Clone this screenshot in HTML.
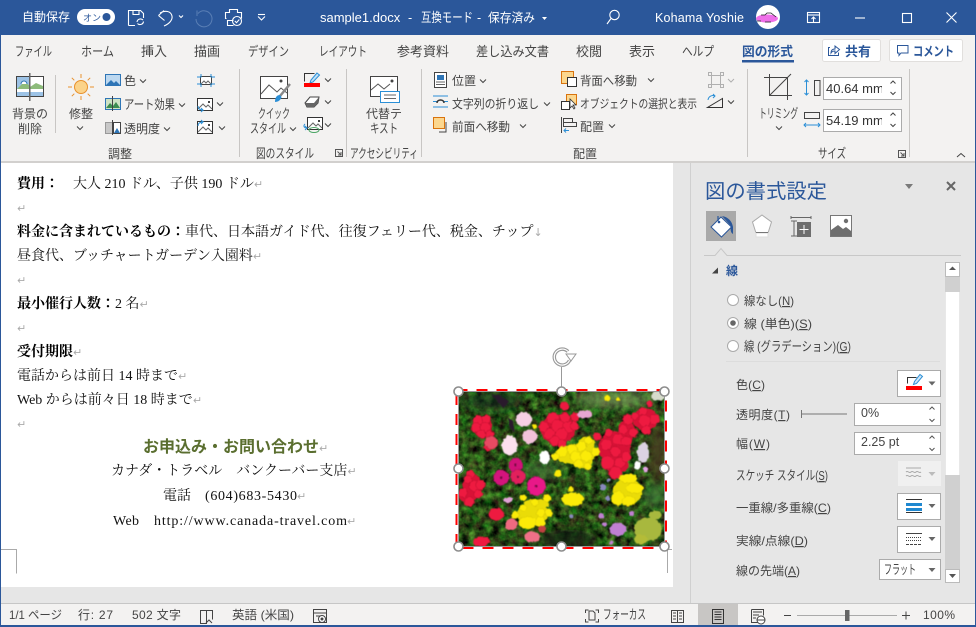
<!DOCTYPE html>
<html lang="ja"><head><meta charset="utf-8"><title>sample1.docx</title>
<style>
html,body{margin:0;padding:0;width:976px;height:627px;overflow:hidden;background:#e6e6e6}
svg{display:block;position:absolute;left:0;top:0}
text{font-family:"Liberation Sans","Noto Sans CJK JP",sans-serif;font-size:12px;fill:#444}
.k{font-size:13px}
.t{font-size:13px;fill:#444}
.d{font-family:"Liberation Serif","Noto Serif CJK SC",serif;font-size:14px;fill:#111}
.b{font-weight:700;fill:#000}
.r{font-family:"DejaVu Sans",sans-serif;font-size:11px;fill:#aaa;font-weight:400}
.s{fill:none;stroke:#444;stroke-width:1}
.bl{fill:none;stroke:#2b8fd6;stroke-width:1}
.box{fill:#fff;stroke:#ababab;stroke-width:1}
.h{fill:#fff;stroke:#8c8c8c;stroke-width:1.6}
</style></head><body>
<svg width="976" height="627" viewBox="0 0 976 627" xmlns="http://www.w3.org/2000/svg">
<defs>
<g id="c"><polyline points="-3,-1.5 0,1.5 3,-1.5" fill="none" stroke="#444" stroke-width="1"/></g>
<g id="pic"><rect x="0.5" y="0.5" width="15" height="12" fill="#fff" stroke="#333"/><polyline points="1,11 6,6 9,9 11,7 15,11" fill="none" stroke="#666"/><rect x="11" y="3" width="2" height="2" fill="#444"/></g>
<clipPath id="ic"><rect x="458" y="391" width="207" height="156"/></clipPath>
<clipPath id="ci1"><rect x="823" y="77" width="59" height="60"/></clipPath>
<filter id="leaf" x="0" y="0" width="100%" height="100%" color-interpolation-filters="sRGB"><feTurbulence type="fractalNoise" baseFrequency="0.13" numOctaves="3" seed="7"/><feColorMatrix type="matrix" values="0.45 0.2 0 0 -0.17  0.4 0.8 0 0 -0.3  0.2 0.15 0 0 -0.09  0 0 0 0 1"/></filter>
<filter id="fl" x="-5%" y="-5%" width="110%" height="110%" color-interpolation-filters="sRGB">
<feTurbulence type="fractalNoise" baseFrequency="0.3" numOctaves="2" seed="3" result="n"/>
<feDisplacementMap in="SourceGraphic" in2="n" scale="3" xChannelSelector="R" yChannelSelector="G"/>
<feGaussianBlur stdDeviation="0.45"/>
</filter>
<filter id="bl2" x="-20%" y="-20%" width="140%" height="140%"><feGaussianBlur stdDeviation="5"/></filter>
</defs>

<!-- frame backgrounds -->
<rect width="976" height="627" fill="#e6e6e6"/>
<rect x="0" y="0" width="976" height="35" fill="#2b579a"/>
<rect x="1" y="35" width="974" height="127" fill="#f3f2f1"/>
<rect x="1" y="161" width="974" height="2" fill="#d2d0ce"/>
<rect x="1" y="163" width="672" height="424" fill="#fff"/>
<rect x="690" y="587" width="1" height="17" fill="#c8c8c8"/>
<rect x="690" y="163" width="1" height="441" fill="#d0d0d0"/>
<rect x="1" y="604" width="974" height="21" fill="#f3f2f1"/>
<rect x="1" y="603" width="974" height="1" fill="#c6c6c6"/>

<!-- title bar -->
<text x="22" y="21" style="fill:#fff" textLength="48" lengthAdjust="spacingAndGlyphs">自動保存</text>
<rect x="77" y="9" width="38" height="16" rx="8" fill="#fff"/>
<text x="83" y="21" style="fill:#2b579a;font-size:9px">オン</text>
<circle cx="106.500" cy="17" r="4" fill="#2b579a"/>
<g fill="none" stroke="#fff" stroke-width="1.1">
<path d="M128.500 25.500V10.500H140.500L143.500 13.500V18M133 10.500V14.500H139V10.500M128.500 25.500H135"/>
<path d="M137 22a3.500 3.500 0 0 1 6-2M143.500 21.500a3.500 3.500 0 0 1-6 2"/>
<path d="M158.500 15.500l5.500-5M158.500 15.500l6 5M160 13c5-3 11-2 12 3 .8 4-3 8-8 10"/>
<polyline points="179,15.500 181,17.500 183,15.500"/>
<path d="M226.500 18.500h-1v-6h4v-3h8v3h4v6m-8 7h-6v-5h6"/>
<circle cx="237" cy="21" r="4.500"/><polyline points="234.800,21 236.500,22.700 239.300,19.500"/>
<polyline points="258,16.500 261.500,20 265,16.500"/><line x1="258" y1="14.500" x2="265" y2="14.500"/>
<circle cx="614.500" cy="15" r="4.700"/><line x1="611" y1="18.500" x2="607" y2="24"/>
<rect x="807.500" y="12.500" width="12" height="10"/><line x1="807" y1="15" x2="820" y2="15"/><path d="M813.500 22v-5M811.500 19l2-2 2 2"/>
<line x1="855" y1="18" x2="865" y2="18"/>
<rect x="902.500" y="13.500" width="9" height="9"/>
<path d="M946.500 12.500l10 10M956.500 12.500l-10 10"/>
</g>
<path d="M198 13.500A8 8 0 1 1 196 19M197 10.500V16" fill="none" stroke="#5a7fb5" stroke-width="1"/>
<text x="320" y="22" style="fill:#fff;font-size:13px">sample1.docx</text>
<text x="408" y="22" style="fill:#fff;font-size:12.500px">-</text>
<text x="421" y="22" style="fill:#fff;font-size:13px" textLength="52" lengthAdjust="spacingAndGlyphs">互換モード</text>
<text x="477" y="22" style="fill:#fff;font-size:12.500px">-</text>
<text x="488" y="22" style="fill:#fff;font-size:12.500px" textLength="47" lengthAdjust="spacingAndGlyphs">保存済み</text>
<polygon points="542,17 547,17 544.500,20" fill="#fff"/>
<text x="655" y="22" style="fill:#fff;font-size:12.500px" textLength="89">Kohama Yoshie</text>
<circle cx="768" cy="17" r="12" fill="#fff"/>
<ellipse cx="767" cy="18.500" rx="11" ry="4" fill="#ee6fe8"/>
<path d="M761 15h4l2-2h4l5 4M757 21h4m4 1h6" stroke="#222" stroke-width=".8" fill="none"/>

<!-- tabs -->
<text x="15" y="56" class="t" textLength="37" lengthAdjust="spacingAndGlyphs">ファイル</text>
<text x="81" y="56" class="t" textLength="33" lengthAdjust="spacingAndGlyphs">ホーム</text>
<text x="141" y="56" class="t" textLength="26" lengthAdjust="spacingAndGlyphs">挿入</text>
<text x="194" y="56" class="t" textLength="26" lengthAdjust="spacingAndGlyphs">描画</text>
<text x="248" y="56" class="t" textLength="41" lengthAdjust="spacingAndGlyphs">デザイン</text>
<text x="319" y="56" class="t" textLength="48" lengthAdjust="spacingAndGlyphs">レイアウト</text>
<text x="397" y="56" class="t" textLength="52" lengthAdjust="spacingAndGlyphs">参考資料</text>
<text x="476" y="56" class="t" textLength="73" lengthAdjust="spacingAndGlyphs">差し込み文書</text>
<text x="576" y="56" class="t" textLength="26" lengthAdjust="spacingAndGlyphs">校閲</text>
<text x="629" y="56" class="t" textLength="26" lengthAdjust="spacingAndGlyphs">表示</text>
<text x="682" y="56" class="t" textLength="32" lengthAdjust="spacingAndGlyphs">ヘルプ</text>
<text x="742" y="56" class="t" style="fill:#2b579a;font-weight:700" textLength="51" lengthAdjust="spacingAndGlyphs">図の形式</text>
<rect x="742" y="60" width="52" height="2.500" fill="#2b579a"/>
<rect x="822.500" y="39.500" width="58" height="22" rx="2" fill="#fff" stroke="#e1dfdd"/>
<rect x="889.500" y="39.500" width="73" height="22" rx="2" fill="#fff" stroke="#e1dfdd"/>
<path d="M830 47.500h-1.500v8h10v-3M835 46v3c-2.500 0-4 1.500-4 4 1-1.800 2.500-2 4-2v2.500l4.500-4-4.500-3.500z" fill="none" stroke="#2b579a"/>
<text x="845" y="56" style="fill:#2b579a;font-weight:700;font-size:13px" textLength="26" lengthAdjust="spacingAndGlyphs">共有</text>
<path d="M897.500 45.500h10.500v7.500h-7l-2 2.500v-2.500h-1.500z" fill="none" stroke="#2b579a"/>
<text x="913" y="56" style="fill:#2b579a;font-weight:700;font-size:13px" textLength="41" lengthAdjust="spacingAndGlyphs">コメント</text>

<!-- ribbon separators -->
<g fill="#c8c6c4">
<rect x="55" y="75" width="1" height="58"/><rect x="239" y="69" width="1" height="88"/><rect x="346" y="69" width="1" height="88"/><rect x="421" y="69" width="1" height="88"/><rect x="747" y="69" width="1" height="88"/><rect x="909" y="69" width="1" height="88"/>
</g>

<!-- background removal -->
<rect x="16.500" y="76.500" width="27" height="20" fill="#fff" stroke="#444"/>
<rect x="17" y="77" width="12" height="12" fill="#9dc3e6"/><rect x="30" y="77" width="13" height="12" fill="#fff"/>
<path d="M17 89l7-7 5 3v4zM30 89v-2l6-4 7 3v3z" fill="#8dbb7b"/>
<path d="M21 84a3 3 0 0 1 6 0" fill="#fff" stroke="#2e75b6"/>
<rect x="17" y="92" width="26" height="4" fill="#9dc3e6"/>
<rect x="29" y="73" width="1.500" height="28" fill="#666"/>
<text x="30" y="118" text-anchor="middle">背景の</text>
<text x="30" y="133" text-anchor="middle">削除</text>
<!-- sun -->
<circle cx="81" cy="87" r="6.500" fill="#fbd38a" stroke="#e8912d"/>
<path d="M81 74v4M81 96v4M68 87h4M90 87h4M71.800 77.800l2.500 2.500M87.700 93.700l2.500 2.500M90.200 77.800l-2.500 2.500M74.300 93.700l-2.500 2.500" stroke="#e8912d" fill="none"/>
<text x="81" y="118" text-anchor="middle">修整</text>
<use href="#c" x="80" y="128"/>
<!-- color etc -->
<rect x="105.500" y="74.500" width="15" height="11" fill="#bcd8f0" stroke="#2e75b6"/><path d="M106 85l5-5 3 3 2-2 4 4z" fill="#2e75b6"/>
<text x="124" y="85">色</text><use href="#c" x="143" y="81"/>
<rect x="105.500" y="98.500" width="15" height="11" fill="#cfe3c4" stroke="#2e75b6"/><path d="M106 108l4-5 3 3 3-4 4 6z" fill="#3d8d50"/><rect x="112" y="96" width="1" height="15" fill="#444"/>
<text x="124" y="109" class="k" textLength="51" lengthAdjust="spacingAndGlyphs">アート効果</text><use href="#c" x="182" y="105"/>
<rect x="105.500" y="122.500" width="7" height="11" fill="#c8c8c8" stroke="#999"/><rect x="113.500" y="122.500" width="7" height="11" fill="#fff" stroke="#444"/><path d="M114 133l3-5 3 5z" fill="#2e75b6"/><rect x="112" y="120" width="1" height="15" fill="#444"/>
<text x="124" y="133" textLength="36">透明度</text><use href="#c" x="167" y="129"/>
<!-- compress / change / reset -->
<rect x="200.500" y="76.500" width="11" height="8" fill="#fff" stroke="#444"/><path d="M201 84l3-3 2 2 2-2 3 3" fill="none" stroke="#666"/>
<path d="M197 77h4v-3M215 77h-4v-3M197 84h4v3M215 84h-4v3" fill="none" stroke="#2b8fd6"/>
<use href="#pic" x="197" y="98"/><path d="M198 106c0 3 2 4 5 4l-2-2m2 2l-2 2" class="bl"/><use href="#c" x="220" y="104"/>
<use href="#pic" x="197" y="121"/><path d="M198 126c0-3 2-4 5-4l-2 2m2-2l-2-2" class="bl"/><use href="#c" x="222" y="128"/>
<!-- quick styles -->
<rect x="260.500" y="76.500" width="27" height="22" fill="#fff" stroke="#444"/><polyline points="261,94 269,85 277,92 281,88 287,93" fill="none" stroke="#555"/><circle cx="281" cy="81" r="1.500" fill="#444"/>
<path d="M290 84l-10 12" stroke="#8a8a8a" stroke-width="2.500"/><path d="M280 95c-3 0-5 2-5 7 3 0 6-2 6.500-5z" fill="#2b8fd6"/>
<text x="258" y="118" class="k" textLength="32" lengthAdjust="spacingAndGlyphs">クイック</text>
<text x="250" y="133" class="k" textLength="36" lengthAdjust="spacingAndGlyphs">スタイル</text><use href="#c" x="293" y="129"/>
<path d="M304.500 81.500v-8h10" fill="none" stroke="#333"/><path d="M317 73l2.500 2-6.500 7-3 1 1-3z" fill="#bfe0f7" stroke="#2b8fd6"/>
<rect x="304" y="83" width="16" height="4" fill="#ff0000"/><use href="#c" x="328" y="80"/>
<path d="M305 103l5-6h9l-1 6-4 4h-7z" fill="#fff" stroke="#444"/><path d="M305 103h9v4h-6z M314 103l5-6-1 6-4 4z" fill="#666"/><use href="#c" x="328" y="102"/>
<use href="#pic" x="307" y="117"/><path d="M305 124c-2 2-1 4 2 4l-2 2m2-2l-2-2" class="bl"/><ellipse cx="314" cy="130" rx="5" ry="2.500" fill="none" stroke="#4aa564"/><use href="#c" x="328" y="125"/>
<text x="256" y="158" class="k" textLength="58" lengthAdjust="spacingAndGlyphs">図のスタイル</text>
<path d="M335.500 149.500h7v7h-7zM337.500 151.500l3.500 3.500M341 152v3h-3" fill="none" stroke="#555"/>
<text x="120" y="158" text-anchor="middle">調整</text>
<!-- alt text -->
<rect x="370.500" y="76.500" width="27" height="20" fill="#fff" stroke="#444"/><polyline points="371,90 378,84 384,89 390,84" fill="none" stroke="#555"/><circle cx="392" cy="81" r="1.500" fill="#444"/>
<rect x="380.500" y="91.500" width="19" height="11" fill="#fff" stroke="#2b8fd6"/><path d="M384 95h12M384 98.500h12" stroke="#666"/>
<text x="384" y="118" text-anchor="middle">代替テ</text>
<text x="370" y="133" class="k" textLength="28" lengthAdjust="spacingAndGlyphs">キスト</text>
<text x="350" y="158" class="k" textLength="68" lengthAdjust="spacingAndGlyphs">アクセシビリティ</text>
<!-- arrange -->
<rect x="434.500" y="72.500" width="12" height="15" fill="#fff" stroke="#444"/><rect x="437" y="75" width="7" height="5" fill="#2e75b6"/><path d="M436 82h9M436 84.500h9" stroke="#666"/>
<text x="452" y="85" textLength="24">位置</text><use href="#c" x="483" y="81"/>
<path d="M433 96h15M433 107h15" stroke="#2b8fd6"/><path d="M433 101.500h4M444 101.500h4" stroke="#2b8fd6"/><path d="M437 103c0-4 7-4 7 0" fill="none" stroke="#333" stroke-width="1.500"/>
<text x="452" y="108" textLength="87" lengthAdjust="spacingAndGlyphs">文字列の折り返し</text><use href="#c" x="547" y="104"/>
<rect x="433.500" y="117.500" width="11" height="11" fill="#fcd78e" stroke="#d9730d"/><path d="M446 122v10h-7" class="s"/>
<text x="452" y="131" textLength="58" lengthAdjust="spacingAndGlyphs">前面へ移動</text><use href="#c" x="523" y="126"/>
<rect x="561.500" y="71.500" width="12" height="12" fill="#fcd78e" stroke="#d9730d"/><rect x="567.500" y="77.500" width="9" height="9" fill="#fff" stroke="#333"/>
<text x="580" y="85" textLength="57" lengthAdjust="spacingAndGlyphs">背面へ移動</text><use href="#c" x="651" y="80"/>
<rect x="566.500" y="94.500" width="10" height="10" fill="#fcd78e" stroke="#d9730d"/><rect x="561.500" y="101.500" width="8" height="8" fill="#fff" stroke="#333"/><path d="M570 99v9l2-2 2 3 1-1-2-3 3 0z" fill="#fff" stroke="#333" stroke-width=".8"/>
<text x="580" y="108" textLength="117" lengthAdjust="spacingAndGlyphs">オブジェクトの選択と表示</text>
<path d="M561.500 117v16" class="s"/><rect x="563.500" y="118.500" width="9" height="4" fill="none" stroke="#444"/><rect x="563.500" y="122.500" width="13" height="4" fill="none" stroke="#444"/><path d="M569 130.500h-5m2-2l-2 2 2 2" class="bl"/>
<text x="580" y="131" textLength="24">配置</text><use href="#c" x="612" y="126"/>
<text x="585" y="158" text-anchor="middle">配置</text>
<rect x="711.500" y="75.500" width="9" height="9" fill="none" stroke="#b0b0b0"/><path d="M708.500 72.500h3v3h-3zM720.500 72.500h3v3h-3zM708.500 84.500h3v3h-3zM720.500 84.500h3v3h-3z" fill="none" stroke="#b0b0b0"/>
<polyline points="728,79 731,82 734,79" fill="none" stroke="#b0b0b0"/>
<path d="M707.500 107.500h15v-9z" fill="none" stroke="#333"/><path d="M708 100a5 5 0 0 1 7-4m-2 2l2-2-2-2" class="bl"/><use href="#c" x="731" y="102"/>
<!-- size -->
<path d="M764 77.500h23.500v22.500M769.500 74v21.500h22.500M769.500 95.500l21.500-21.500" fill="none" stroke="#444"/>
<text x="759" y="118" class="k" textLength="39" lengthAdjust="spacingAndGlyphs">トリミング</text><use href="#c" x="779" y="128"/>
<path d="M806.500 80v15M804.500 82l2-2 2 2M804.500 93l2 2 2-2" class="bl"/>
<rect x="814.500" y="80.500" width="5.500" height="15" fill="none" stroke="#444"/>
<rect x="804.500" y="112.500" width="15" height="6" fill="none" stroke="#444"/><path d="M804 125h16M806 123l-2 2 2 2M818 123l2 2-2 2" class="bl"/>
<rect x="823.500" y="77.500" width="78" height="22" class="box"/>
<rect x="823.500" y="109.500" width="78" height="22" class="box"/>
<g clip-path="url(#ci1)"><text x="826" y="93" style="font-size:13px;fill:#333">40.64 mm</text><text x="826" y="125" style="font-size:13px;fill:#333">54.19 mm</text></g>
<path d="M890.500 83.500l2.500-2.500 2.500 2.500M890.500 92l2.500 2.500 2.500-2.500M890.500 115.500l2.500-2.500 2.500 2.500M890.500 124l2.500 2.500 2.500-2.500" fill="none" stroke="#444"/>
<text x="818" y="158" class="k" textLength="28" lengthAdjust="spacingAndGlyphs">サイズ</text>
<path d="M898.500 150.500h7v7h-7zM900.500 152.500l3.500 3.500M904 153v3h-3" fill="none" stroke="#555"/>
<polyline points="957,157 961,153.500 965,157" fill="none" stroke="#444"/>

<!-- document -->
<text x="17" y="188" class="d"><tspan class="b">費用：</tspan></text>
<text x="73" y="188" class="d">大人 210 ドル、子供 190 ドル<tspan class="r">↵</tspan></text>
<text x="17" y="212" class="r">↵</text>
<text x="17" y="236" class="d"><tspan class="b">料金に含まれているもの：</tspan>車代、日本語ガイド代、往復フェリー代、税金、チップ<tspan class="r">↓</tspan></text>
<text x="17" y="260" class="d">昼食代、ブッチャートガーデン入園料<tspan class="r">↵</tspan></text>
<text x="17" y="284" class="r">↵</text>
<text x="17" y="308" class="d"><tspan class="b">最小催行人数：</tspan>2 名<tspan class="r">↵</tspan></text>
<text x="17" y="332" class="r">↵</text>
<text x="17" y="356" class="d"><tspan class="b">受付期限</tspan><tspan class="r">↵</tspan></text>
<text x="17" y="380" class="d">電話からは前日 14 時まで<tspan class="r">↵</tspan></text>
<text x="17" y="404" class="d">Web からは前々日 18 時まで<tspan class="r">↵</tspan></text>
<text x="17" y="428" class="r">↵</text>
<text x="143" y="452" style="font-size:16px;font-weight:700;fill:#5a6e2f">お申込み・お問い合わせ<tspan class="r">↵</tspan></text>
<text x="111" y="475" class="d">カナダ・トラベル　バンクーバー支店<tspan class="r">↵</tspan></text>
<text x="163" y="500" class="d">電話</text>
<text x="205" y="500" class="d" textLength="92">(604)683-5430</text>
<text x="297" y="500" class="r">↵</text>
<text x="113" y="525" class="d" textLength="26">Web</text>
<text x="154" y="525" class="d" textLength="193">http://www.canada-travel.com</text>
<text x="347" y="525" class="r">↵</text>
<path d="M1 549.500h15.500v24" fill="none" stroke="#aaa"/>
<path d="M665 549.500h7M667.500 549v24" fill="none" stroke="#aaa"/>

<!-- photo -->
<g clip-path="url(#ic)">
<rect x="458" y="391" width="207" height="156" fill="#2b5222"/>
<rect x="458" y="391" width="207" height="156" filter="url(#leaf)"/>
<g filter="url(#bl2)"><g transform="translate(458 391) scale(.33333)">
<ellipse cx="330" cy="445" rx="90" ry="30" fill="#0c1a0a" opacity=".75"/>
<ellipse cx="100" cy="30" rx="90" ry="30" fill="#18301a" opacity=".6"/>
<ellipse cx="470" cy="25" rx="120" ry="22" fill="#7f9f60" opacity=".75"/>
<ellipse cx="600" cy="190" rx="28" ry="90" fill="#45391f" opacity=".9"/>
<ellipse cx="590" cy="315" rx="35" ry="35" fill="#3f7a3a" opacity=".8"/>
<ellipse cx="250" cy="240" rx="60" ry="30" fill="#4a7d3a" opacity=".6"/>
</g></g>
<g filter="url(#fl)"><g transform="translate(458 391) scale(.33333)">
<path d="M100 10l30 5 25 15-20 22-20-25zM150 80l15 10 5 35-15-15z" fill="#2a1a2c"/>
<ellipse cx="600" cy="15" rx="22" ry="14" fill="#d6dccb"/>
<!-- light green clusters -->
<g fill="#a8b83e"><ellipse cx="570" cy="415" rx="42" ry="35"/><ellipse cx="592" cy="372" rx="20" ry="13"/><ellipse cx="548" cy="445" rx="20" ry="15" fill="#b4bc38"/></g>
<!-- red backing masses -->
<g fill="#d81236">
<ellipse cx="72" cy="108" rx="30" ry="28"/><ellipse cx="300" cy="115" rx="52" ry="44"/><ellipse cx="470" cy="170" rx="48" ry="48"/><ellipse cx="475" cy="222" rx="38" ry="25"/><ellipse cx="505" cy="120" rx="26" ry="34"/><ellipse cx="562" cy="85" rx="38" ry="34"/><ellipse cx="42" cy="285" rx="28" ry="38"/><ellipse cx="28" cy="315" rx="26" ry="20"/>
</g>
<!-- reds -->
<g fill="#ee1a40" stroke="#b80e2c" stroke-width="1.500">
<circle cx="60" cy="88" r="15"/><circle cx="85" cy="85" r="14"/><circle cx="55" cy="110" r="15"/><circle cx="82" cy="110" r="16"/><circle cx="70" cy="130" r="13"/><circle cx="95" cy="132" r="13"/><circle cx="90" cy="168" r="12"/>
<circle cx="285" cy="82" r="18"/><circle cx="320" cy="80" r="16"/><circle cx="258" cy="107" r="16"/><circle cx="300" cy="105" r="20"/><circle cx="332" cy="108" r="18"/><circle cx="350" cy="105" r="13"/><circle cx="275" cy="130" r="17"/><circle cx="310" cy="130" r="18"/><circle cx="290" cy="150" r="16"/><circle cx="312" cy="158" r="13"/><circle cx="350" cy="78" r="13"/>
<circle cx="320" cy="45" r="13"/><circle cx="418" cy="137" r="12"/>
<circle cx="510" cy="85" r="16"/><circle cx="495" cy="115" r="14"/><circle cx="525" cy="125" r="14"/><circle cx="452" cy="125" r="12"/><circle cx="480" cy="145" r="17"/><circle cx="445" cy="162" r="17"/><circle cx="472" cy="182" r="16"/><circle cx="505" cy="150" r="15"/><circle cx="448" cy="215" r="20"/><circle cx="485" cy="215" r="17"/><circle cx="505" cy="197" r="15"/><circle cx="472" cy="245" r="19"/>
<circle cx="575" cy="38" r="9"/><circle cx="555" cy="60" r="13"/><circle cx="590" cy="85" r="15"/><circle cx="560" cy="90" r="18"/><circle cx="565" cy="118" r="14"/><circle cx="530" cy="75" r="11"/>
<circle cx="38" cy="250" r="13"/><circle cx="30" cy="265" r="12"/><circle cx="50" cy="285" r="17"/><circle cx="68" cy="282" r="15"/><circle cx="15" cy="305" r="14"/><circle cx="60" cy="308" r="13"/><circle cx="35" cy="332" r="15"/>
<ellipse cx="115" cy="370" rx="23" ry="19"/><ellipse cx="70" cy="452" rx="25" ry="15"/>
</g>
<circle cx="100" cy="155" r="20" fill="#e84a62" stroke="#b02040" stroke-width="1.500"/>
<!-- pale petunias -->
<ellipse cx="198" cy="85" rx="25" ry="22" fill="#f6d0e4"/><ellipse cx="215" cy="137" rx="22" ry="21" fill="#f2c2da"/><ellipse cx="155" cy="163" rx="23" ry="30" fill="#fbe0ee"/><ellipse cx="260" cy="200" rx="16" ry="20" fill="#fff"/>
<ellipse cx="380" cy="70" rx="22" ry="12" fill="#e8a6d2"/>
<ellipse cx="555" cy="185" rx="18" ry="30" fill="#dcd2e2"/><ellipse cx="538" cy="222" rx="10" ry="14" fill="#fff"/><circle cx="563" cy="236" r="8" fill="#e2a4e2"/>
<!-- magenta -->
<g stroke="#a00a5c" stroke-width="1.500">
<circle cx="173" cy="222" r="21" fill="#d01278"/><circle cx="130" cy="260" r="23" fill="#d4147c"/><circle cx="180" cy="257" r="22" fill="#e2205c"/><circle cx="235" cy="285" r="28" fill="#e81888"/>
</g>
<g fill="#6d0a3c"><circle cx="173" cy="222" r="4"/><circle cx="130" cy="260" r="4"/><circle cx="180" cy="257" r="4"/><circle cx="235" cy="285" r="5"/></g>
<!-- yellow backing masses -->
<g fill="#eadc08">
<ellipse cx="352" cy="190" rx="62" ry="30"/><ellipse cx="385" cy="160" rx="26" ry="22"/><ellipse cx="375" cy="215" rx="28" ry="18"/><ellipse cx="508" cy="302" rx="44" ry="40"/><ellipse cx="225" cy="368" rx="48" ry="32"/><ellipse cx="235" cy="340" rx="38" ry="16"/>
</g>
<!-- yellows -->
<g fill="#fbeb08" stroke="#c2b406" stroke-width="1">
<circle cx="392" cy="147" r="12"/><circle cx="370" cy="165" r="15"/><circle cx="312" cy="182" r="16"/><circle cx="342" cy="175" r="15"/><circle cx="292" cy="197" r="11"/><circle cx="412" cy="182" r="13"/><circle cx="352" cy="197" r="16"/><circle cx="385" cy="195" r="17"/><circle cx="362" cy="218" r="13"/><circle cx="390" cy="226" r="11"/>
<ellipse cx="510" cy="262" rx="28" ry="14"/><ellipse cx="530" cy="292" rx="26" ry="15"/><ellipse cx="480" cy="322" rx="20" ry="22"/><ellipse cx="512" cy="330" rx="20" ry="15"/>
<ellipse cx="345" cy="325" rx="33" ry="20"/><circle cx="340" cy="295" r="8"/><circle cx="300" cy="247" r="11"/>
<circle cx="195" cy="320" r="10"/><circle cx="268" cy="322" r="12"/><circle cx="230" cy="335" r="11"/><circle cx="195" cy="350" r="10"/><circle cx="248" cy="365" r="13"/><circle cx="272" cy="365" r="12"/><circle cx="172" cy="372" r="11"/><ellipse cx="210" cy="395" rx="29" ry="18"/><circle cx="247" cy="393" r="15"/>
<circle cx="448" cy="22" r="9"/><circle cx="480" cy="25" r="6"/><circle cx="230" cy="106" r="7"/>
</g>
<!-- pinks / purples -->
<circle cx="160" cy="400" r="18" fill="#ef6a80"/><ellipse cx="222" cy="438" rx="24" ry="16" fill="#f07088"/><circle cx="252" cy="415" r="11" fill="#bf4040"/><ellipse cx="150" cy="327" rx="14" ry="8" fill="#e2a2d8"/>
<g fill="#c080d2"><ellipse cx="480" cy="415" rx="25" ry="20"/><circle cx="430" cy="375" r="9"/><circle cx="440" cy="400" r="7"/><circle cx="520" cy="368" r="8"/><circle cx="460" cy="455" r="6"/></g>
<g fill="#8888bc"><circle cx="435" cy="288" r="10"/><circle cx="452" cy="268" r="6"/><circle cx="450" cy="322" r="7"/><circle cx="340" cy="376" r="6"/></g>
</g></g>
</g>
<rect x="456.500" y="390" width="209.500" height="158" fill="none" stroke="#ff0000" stroke-width="2" stroke-dasharray="11 9"/>
<rect x="458.500" y="391.500" width="206" height="155" fill="none" stroke="#999" stroke-width="1"/>
<line x1="561.500" y1="367" x2="561.500" y2="391" stroke="#999"/>
<path d="M568 351.500a8 8 0 1 0 1.500 9" fill="none" stroke="#999" stroke-width="3.500"/>
<path d="M568 351.500a8 8 0 1 0 1.500 9" fill="none" stroke="#fff" stroke-width="1.200"/>
<polygon points="566,354 576,354 571,361" fill="#fff" stroke="#999"/>
<circle class="h" cx="458.500" cy="391.500" r="4.500"/><circle class="h" cx="561.500" cy="391.500" r="4.500"/><circle class="h" cx="664.500" cy="391.500" r="4.500"/>
<circle class="h" cx="458.500" cy="468.500" r="4.500"/><circle class="h" cx="664.500" cy="468.500" r="4.500"/>
<circle class="h" cx="458.500" cy="546.500" r="4.500"/><circle class="h" cx="561.500" cy="546.500" r="4.500"/><circle class="h" cx="664.500" cy="546.500" r="4.500"/>

<!-- pane -->
<text x="705" y="198" style="font-size:20px;fill:#2b579a" textLength="122" lengthAdjust="spacingAndGlyphs">図の書式設定</text>
<polygon points="905,184 913,184 909,189" fill="#7a7a7a"/>
<path d="M947 182l8 8M955 182l-8 8" stroke="#666" stroke-width="2" fill="none"/>
<rect x="706" y="211" width="30" height="30" fill="#a9a9a9"/>
<path d="M721 217l10.500 10-10 10-10.500-10z" fill="#fff" stroke="#2b579a"/><path d="M718 216v5" stroke="#2b579a" stroke-width="1.200"/><circle cx="719" cy="222" r="1.300" fill="#2b579a"/><path d="M722 216c6 1 10 5 11 11l0 7c-2-1-3-4-2-8z" fill="#2b579a"/>
<path d="M762 215l9.500 7-3.500 11h-12l-3.500-11z" fill="#fff" stroke="#aaa"/><path d="M756 233h12v4h-12z" fill="#fff" stroke="#ddd"/><path d="M756 232.500h12" stroke="#777"/>
<path d="M791 216v3M811 216v3M791 217.500h20M791 221h6M791 236h6M794 221v15" stroke="#666" fill="none"/>
<rect x="797" y="222" width="14" height="15" fill="#6e6e6e"/><path d="M804 225v9M799.500 229.500h9" stroke="#fff"/>
<rect x="830.500" y="215.500" width="21" height="21" fill="#fff" stroke="#777"/><path d="M831 236v-6l7-5 5 4 3-2 5 4v5z" fill="#6e6e6e"/><circle cx="846" cy="221" r="2.200" fill="#6e6e6e"/>
<path d="M704 255.500h11l6-7 6 7h234" fill="none" stroke="#c8c8c8"/>
<rect x="945" y="262" width="15" height="320" fill="#d0d0d0"/><rect x="945.500" y="262.500" width="14" height="14" fill="#fff" stroke="#bbb"/>
<polygon points="949,270 956,270 952.500,266.500" fill="#555"/>
<rect x="945.500" y="292" width="14" height="183" fill="#fff"/>
<rect x="945.500" y="569.500" width="14" height="13" fill="#fff" stroke="#bbb"/><polygon points="949,574 956,574 952.500,578" fill="#555"/>
<polygon points="712,273.500 718,273.500 718,267.500" fill="#444"/>
<text x="726" y="275" style="fill:#2b579a;font-weight:700">線</text>
<circle cx="733" cy="300" r="5.500" fill="#fff" stroke="#aaa"/>
<circle cx="733" cy="323" r="5.500" fill="#fff" stroke="#aaa"/><circle cx="733" cy="323" r="2.800" fill="#666"/>
<circle cx="733" cy="346" r="5.500" fill="#fff" stroke="#aaa"/>
<text x="744" y="305" textLength="50" lengthAdjust="spacingAndGlyphs">線なし(<tspan text-decoration="underline">N</tspan>)</text>
<text x="744" y="328" textLength="68" lengthAdjust="spacingAndGlyphs">線 (単色)(<tspan text-decoration="underline">S</tspan>)</text>
<text x="744" y="351" class="k" textLength="107" lengthAdjust="spacingAndGlyphs">線 (グラデーション)(<tspan text-decoration="underline">G</tspan>)</text>
<rect x="726" y="361" width="214" height="1" fill="#dcdcdc"/>
<text x="736" y="389" textLength="29">色(<tspan text-decoration="underline">C</tspan>)</text>
<rect x="897.500" y="370.500" width="43" height="26" class="box"/>
<path d="M907.500 383.500v-6h9" fill="none" stroke="#333"/><path d="M920 374.500l2.500 2-6 7-3 1 1-3z" fill="#cfe6f7" stroke="#2b8fd6"/><rect x="906" y="386" width="16" height="4" fill="#ff0000"/>
<polygon points="928.500,381.500 935.500,381.500 932,385.500" fill="#666"/>
<text x="736" y="419" textLength="54">透明度(<tspan text-decoration="underline">T</tspan>)</text>
<path d="M801.500 410v8M802 414h45" stroke="#777" fill="none"/>
<rect x="854.500" y="403.500" width="86" height="22" class="box"/><text x="861" y="417" style="font-size:12.500px">0%</text>
<path d="M929.500 409.500l2.500-2.500 2.500 2.500M929.500 419l2.500 2.500 2.500-2.500" fill="none" stroke="#555"/>
<text x="736" y="448" textLength="34">幅(<tspan text-decoration="underline">W</tspan>)</text>
<rect x="854.500" y="432.500" width="86" height="22" class="box"/><text x="861" y="446" style="font-size:12.500px">2.25 pt</text>
<path d="M929.500 438.500l2.500-2.500 2.500 2.500M929.500 448l2.500 2.500 2.500-2.500" fill="none" stroke="#555"/>
<text x="736" y="480" class="k" textLength="92" lengthAdjust="spacingAndGlyphs">スケッチ スタイル(<tspan text-decoration="underline">S</tspan>)</text>
<rect x="898" y="461" width="43" height="25" fill="#f0f0f0"/>
<path d="M906 468h15M906 472c2-2 3 2 5 0s3 2 5 0 3 2 5 0M906 476c2-2 3 2 5 0s3 2 5 0 3 2 5 0" fill="none" stroke="#aaa"/>
<polygon points="928.500,472 935.500,472 932,476" fill="#bbb"/>
<text x="736" y="512" textLength="95" lengthAdjust="spacingAndGlyphs">一重線/多重線(<tspan text-decoration="underline">C</tspan>)</text>
<rect x="897.500" y="493.500" width="43" height="26" class="box"/>
<rect x="906" y="499" width="16" height="1" fill="#333"/><rect x="906" y="503" width="16" height="3" fill="#1f88d0"/><rect x="906" y="508" width="16" height="3" fill="#1f88d0"/><rect x="906" y="512" width="16" height="1" fill="#333"/>
<polygon points="928.500,504 935.500,504 932,508" fill="#666"/>
<text x="736" y="545" textLength="72" lengthAdjust="spacingAndGlyphs">実線/点線(<tspan text-decoration="underline">D</tspan>)</text>
<rect x="897.500" y="526.500" width="43" height="26" class="box"/>
<path d="M906 533.500h16" stroke="#444"/><path d="M906 537.500h16M906 540.500h16" stroke="#444" stroke-dasharray="1 1"/><path d="M906 544.500h16" stroke="#444" stroke-dasharray="3 1"/>
<polygon points="928.500,537 935.500,537 932,541" fill="#666"/>
<text x="736" y="575" textLength="64" lengthAdjust="spacingAndGlyphs">線の先端(<tspan text-decoration="underline">A</tspan>)</text>
<rect x="879.500" y="559.500" width="61" height="20" class="box"/>
<text x="884" y="574" class="k" textLength="32" lengthAdjust="spacingAndGlyphs">フラット</text>
<polygon points="928.500,568 935.500,568 932,572" fill="#666"/>

<!-- status bar -->
<text x="9" y="619" textLength="53" lengthAdjust="spacingAndGlyphs">1/1 ページ</text>
<text x="78" y="619" textLength="35">行: 27</text>
<text x="132" y="619" textLength="49">502 文字</text>
<path d="M200.500 610.500h6v13h-6zM206.500 610.500h6v9" fill="none" stroke="#444"/><path d="M206 623l3-3 3 3" fill="none" stroke="#444"/>
<text x="232" y="619" textLength="62" lengthAdjust="spacingAndGlyphs">英語 (米国)</text>
<rect x="313.500" y="609.500" width="13" height="13" fill="none" stroke="#444"/><path d="M314 613h12M316 616h7" stroke="#444"/><circle cx="322" cy="619" r="3.500" fill="#fff" stroke="#444"/><circle cx="322" cy="619" r="1.500" fill="#444"/>
<path d="M585.500 613v-3h3M598.500 613v-3h-3M585.500 619v3h3M598.500 619v3h-3" fill="none" stroke="#444"/><path d="M589 611h4l2 2v7h-6z" fill="none" stroke="#444"/>
<text x="603" y="619" class="k" textLength="43" lengthAdjust="spacingAndGlyphs">フォーカス</text>
<path d="M671.500 610.500h6v12h-6zM677.500 610.500h6v12h-6zM673 613h3M673 616h3M673 619h3M679 613h3M679 616h3M679 619h3" fill="none" stroke="#444"/>
<rect x="698" y="604" width="40" height="21" fill="#c8c6c4"/>
<path d="M712.500 609.500h11v14h-11zM714.500 612h7M714.500 614.500h7M714.500 617h7M714.500 619.500h7" fill="none" stroke="#333"/>
<path d="M751.500 609.500h12v6M751.500 609.500v13h6M753 612h9M753 615h6M753 618h3" fill="none" stroke="#444"/><circle cx="761" cy="620" r="4" fill="#fff" stroke="#444"/><path d="M757 620h8" stroke="#444"/>
<path d="M784 615.500h7" stroke="#444"/>
<rect x="797" y="615" width="100" height="1" fill="#aaa"/><rect x="845" y="610" width="4.500" height="11" fill="#666"/>
<path d="M902 615.500h8M906 611.500v8" stroke="#444"/>
<text x="923" y="619" textLength="32">100%</text>

<!-- outer frame -->
<rect x="0" y="0" width="976" height="1" fill="#2b579a"/><rect x="0" y="0" width="1" height="627" fill="#2b579a"/><rect x="975" y="0" width="1" height="627" fill="#2b579a"/><rect x="0" y="625" width="976" height="2" fill="#2b579a"/>
</svg>
</body></html>
